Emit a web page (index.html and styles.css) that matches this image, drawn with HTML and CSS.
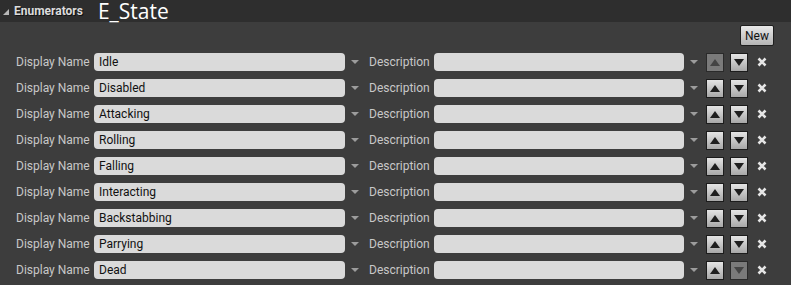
FILE: index.html
```html
<!DOCTYPE html>
<html lang="en">
<head>
  <meta charset="UTF-8">
  <title>Enumerators</title>
  <link rel="stylesheet" href="styles.css">
</head>
<body>
  <div class="header">
    <span class="collapse"></span>
    <span class="section">Enumerators</span>
    <span class="enum-name">E_State</span>
  </div>

  <div class="toolbar">
    <button class="new-btn">New</button>
  </div>

  <div class="rows" id="rows"></div>

  <script>
    // Enum entries
    const names = ["Idle", "Disabled", "Attacking", "Rolling", "Falling", "Interacting", "Backstabbing", "Parrying", "Dead"];
    const rows = document.getElementById("rows");
    const arrow = '<svg class="drop" width="8" height="4" viewBox="0 0 8 4"><path d="M0 0H8L4 4Z"/></svg>';

    names.forEach((n, i) => {
      const row = document.createElement("div");
      row.className = "row";
      row.innerHTML =
        '<span class="label">Display Name</span>' +
        '<div class="field name">' + n + '</div>' + arrow +
        '<span class="label desc-label">Description</span>' +
        '<div class="field desc"></div>' + arrow +
        '<button class="move up' + (i === 0 ? ' disabled' : '') + '"><svg width="10" height="7" viewBox="0 0 10 7"><path d="M0 7L5 0L10 7Z"/></svg></button>' +
        '<button class="move' + (i === names.length - 1 ? ' disabled' : '') + '"><svg width="10" height="7" viewBox="0 0 10 7"><path d="M0 0H10L5 7Z"/></svg></button>' +
        '<svg class="remove" width="10" height="10" viewBox="0 0 10 10"><path d="M1.5 1.5L8.5 8.5M8.5 1.5L1.5 8.5"/></svg>';
      rows.appendChild(row);
    });
  </script>
</body>
</html>
```

FILE: styles.css
```css
body {
  margin: 0;
  background: #3d3d3d;
  font-family: Roboto, "Liberation Sans", sans-serif;
  font-size: 12px;
  color: #c8c8c8;
}

.header {
  height: 22px;
  background: #2e2e2e;
  display: flex;
  align-items: center;
}
.collapse {
  width: 0;
  height: 0;
  margin-left: 3px;
  border-left: 6px solid transparent;
  border-bottom: 6px solid #b8b8b8;
  margin-top: 2px;
}
.section {
  margin-left: 5px;
  font-weight: bold;
  color: #dcdcdc;
  text-shadow: 1px 1px 0 #111;
}
.enum-name {
  margin-left: 15px;
  font-family: "Open Sans", sans-serif;
  font-size: 21px;
  color: #fff;
  line-height: 22px;
}

.toolbar {
  display: flex;
  justify-content: flex-end;
  padding: 3px 17px 0 0;
  height: 24px;
}
.new-btn {
  width: 34px;
  height: 21px;
  padding: 0;
  font-family: Roboto, sans-serif;
  font-size: 12px;
  color: #111;
  background: linear-gradient(#e8e8e8, #b4b4b4);
  border: 1px solid #1e1e1e;
  border-radius: 2px;
}

.row {
  height: 26px;
  display: flex;
  align-items: center;
  padding-left: 16px;
}
.label {
  width: 78px;
}
.desc-label {
  width: 65px;
  margin-left: 10px;
}
.field {
  height: 18px;
  line-height: 18px;
  background: #dadada;
  border-radius: 4px;
  color: #111;
  padding-left: 5px;
  box-sizing: border-box;
}
.field.name {
  width: 251px;
}
.field.desc {
  width: 250px;
}
.drop {
  fill: #9c9c9c;
  margin-left: 6px;
}

.move {
  width: 18px;
  height: 19px;
  padding: 0;
  margin-left: 6px;
  display: flex;
  align-items: center;
  justify-content: center;
  background: linear-gradient(#e4e4e4, #a8a8a8);
  border: 1px solid #1c1c1c;
  box-sizing: border-box;
  fill: #1e1e1e;
}
.move.up {
  margin-left: 8px;
}
.move.disabled {
  background: #7a7a7a;
  border-color: #2a2a2a;
  fill: #444;
}
.remove {
  margin-left: 9px;
  stroke: #e6e6e6;
  stroke-width: 2.6;
}
```
